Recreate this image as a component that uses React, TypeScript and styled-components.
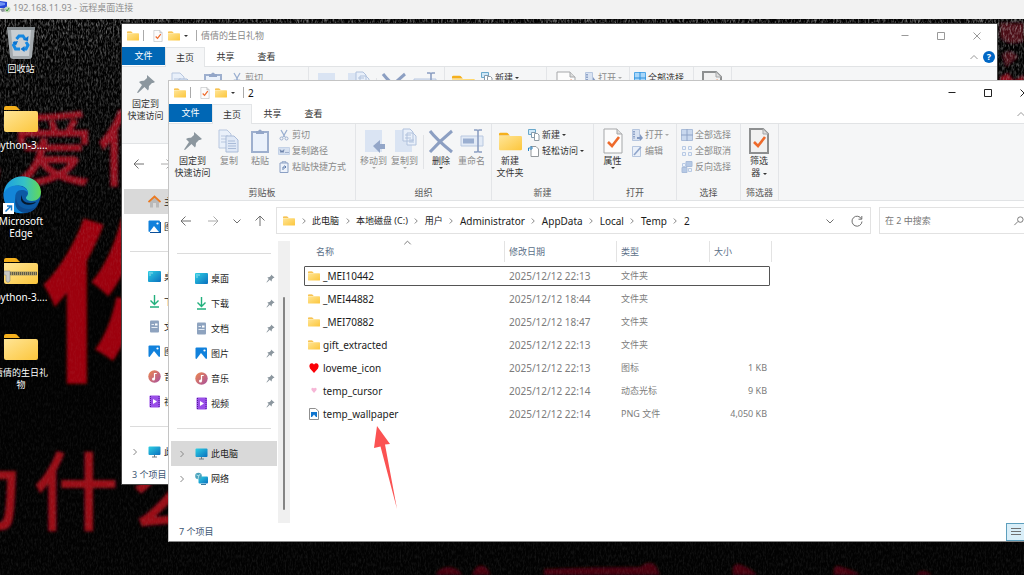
import React from "react";
import styled, { createGlobalStyle, css } from "styled-components";

const GlobalStyle = createGlobalStyle`
  * { box-sizing: border-box; }
  body {
    margin: 0;
    font-family: "Noto Sans", "Noto Sans CJK SC", sans-serif;
    font-size: 9px;
    line-height: 12px;
    color: #333;
    overflow: hidden;
  }
  button {
    font: inherit;
    color: inherit;
    background: none;
    border: 0;
    padding: 0;
    margin: 0;
    white-space: nowrap;
  }
  ul { list-style: none; margin: 0; padding: 0; }
  svg { display: block; flex: none; }
`;

/* ---------- icons ---------- */

type IconProps = { size?: number };

const FolderIcon = ({ size = 13 }: IconProps) => (
  <svg width={size} height={size} viewBox="0 0 34 34">
    <path d="M0 8V6q0-2 2-2h9q2 0 3 2l2 2H0z" fill="#f5b01c" />
    <path d="M0 9h32q2 0 2 2v17q0 2-2 2H2q-2 0-2-2z" fill="url(#folderFill)" />
  </svg>
);

const ZipIcon = () => (
  <svg width="34" height="34" viewBox="0 0 34 34">
    <path d="M0 8V6q0-2 2-2h9q2 0 3 2l2 2H0z" fill="#f5b01c" />
    <path d="M0 9h32q2 0 2 2v17q0 2-2 2H2q-2 0-2-2z" fill="url(#folderFill)" />
    <path d="M4 19.500h29" stroke="#a99863" strokeWidth="4" />
    <path d="M6 19.500h27" stroke="#5e5a4c" strokeWidth="3" strokeDasharray="1 1" />
    <path d="M0 17h6v10q-2 3-4 0v-6H0z" fill="#c8c8c4" stroke="#8d8d86" strokeWidth=".6" />
  </svg>
);

const RecycleIcon = () => (
  <svg width="28" height="34" viewBox="0 0 28 34">
    <path d="M0 1l3 30q.5 2 3 2h16q2.500 0 3-2l3-30z" fill="#a3a9ad" />
    <path d="M4 4h20l-2 26H6z" fill="#c9ced2" />
    <path d="M0 1h28l-.4 3H.4z" fill="#858c90" />
    <path d="M9.500 13l2.500-3h4l2 3M19 16l2 3-2 4h-3M8.500 16L6.500 19l2 4H13" fill="none" stroke="#1687e0" strokeWidth="3" />
    <path d="M16 14l5 1 .5-5zM17.500 20v6l-4-3zM5.500 16l5.500-1-2 4.500z" fill="#0b72cf" />
  </svg>
);

const EdgeIcon = () => (
  <svg width="40" height="40" viewBox="0 0 40 40">
    <circle cx="21" cy="20" r="18.500" fill="#0c59a4" />
    <path d="M2.500 20C3 9 11 1.500 21 1.500c11 0 19 7 19 15.500 0 6-4.500 9-9 9-4 0-6-1.500-6-3 0-1.500 2-2 2-5 0-4-4-7.500-9.500-7.500C10 10.500 4 15 2.500 20z" fill="url(#edgeTop)" />
    <path d="M2.500 20C4 14 9 10.500 15 10.500c6 0 12 3 12 7.500-1.500-2.500-4-3-6.500-3-5 0-7 4.500-6 10 1 6 6 11 12 11.500C14 42 2.500 33 2.500 20z" fill="#1385d8" />
    <path d="M15 22c0 7 5 12 12 12 5 0 8-2 10.500-5-4.500 8-10 9.500-16 8.500-6-2-9-8-6.500-15.500z" fill="#0b4a90" />
    <path d="M21 20c-1 6 5 10 14 7-3 4-13 4-15-2q-.5-3 1-5z" fill="#05182e" />
    <rect x="2" y="28" width="11" height="11" fill="#fff" />
    <path d="M4.500 36.500l5.500-5.500M6 31h4.500v4.500" fill="none" stroke="#1779cb" strokeWidth="1.500" />
  </svg>
);

const RdpIcon = () => (
  <svg width="11" height="13" viewBox="0 0 11 13">
    <path d="M0 1l7 1v6L0 8z" fill="#2647d8" />
    <path d="M0 2l5 1v2L0 6z" fill="#6f93f4" />
    <path d="M0 9l4-1 3 3-5 1z" fill="#8f959e" />
    <circle cx="7.500" cy="9.500" r="3" fill="#c3d7bb" />
    <path d="M6 9.500l1 1.500 2-3" fill="none" stroke="#3b983a" />
  </svg>
);

const PropertiesIcon = ({ size = 13, gray = false }: IconProps & { gray?: boolean }) => (
  <svg width={size} height={size} viewBox="0 0 26 26">
    <path d="M4 1h13l5 5v19H4z" fill={gray ? "#f1f1f1" : "#fcfcfc"} stroke={gray ? "#8d8f90" : "#a5a7a9"} strokeWidth={gray ? 2 : 1} />
    <path d="M17 1v5h5" fill="#ddd" stroke="#a5a7a9" />
    <path d="M8 14l4 4 7-9" fill="none" stroke="#ee6a2b" strokeWidth="2.600" />
  </svg>
);

const PushPin = ({ size = 20 }: IconProps) => (
  <svg width={size} height={size} viewBox="0 0 20 20">
    <path d="M11 1l8 7-2 1-1 0-3 3q0 3-1 4.500L8.500 13 2 19l-1-.6L6 11 3 8q2-1.500 5-1.300L11 4z" fill="#8c979f" />
  </svg>
);

const CopyIcon = () => (
  <svg width="22" height="26" viewBox="0 0 22 26">
    <path d="M1 2h8l4 4v14H1z" fill="#e9f0fa" stroke="#b8c7df" />
    <path d="M3 8h7M3 11h7M3 14h7" stroke="#b8c7df" />
    <path d="M8 8h8l4 4v12H8z" fill="#dfe8f6" stroke="#a9bbd8" />
    <path d="M10 13h7M10 15.500h8M10 18h8M10 20.500h8" stroke="#a9bbd8" />
  </svg>
);

const PasteIcon = () => (
  <svg width="20" height="26" viewBox="0 0 20 26">
    <path d="M2 4h16v20H2z" fill="#eaf1fb" stroke="#9dafce" strokeWidth="2" />
    <path d="M6 5V3h2q2-3 4 0h2v3H6z" fill="#93a6c8" />
  </svg>
);

const MoveToIcon = () => (
  <svg width="22" height="26" viewBox="0 0 22 26">
    <path d="M2 2h17v22H2z" fill="#dae4f3" />
    <path d="M10 18l7-6v4h5v5h-5v4z" fill="#93a6c8" />
  </svg>
);

const CopyToIcon = () => (
  <svg width="24" height="26" viewBox="0 0 24 26">
    <path d="M2 2h17v22H2z" fill="#dae4f3" />
    <path d="M10 1h7l3 3v9H10zM14 5h6l3 3v9h-9z" fill="#e9f0fa" stroke="#b1c2dd" />
    <path d="M12 7h6M12 10h6M16 12h5M16 14h5" stroke="#b1c2dd" />
  </svg>
);

const DeleteIcon = () => (
  <svg width="26" height="26" viewBox="0 0 26 26">
    <path d="M2 3q6 8 22 21M24 3Q13 12 2 24" fill="none" stroke="#8c9fc2" strokeWidth="3" />
  </svg>
);

const RenameIcon = () => (
  <svg width="26" height="26" viewBox="0 0 26 26">
    <path d="M2 8h22v10H2z" fill="#e2eaf6" stroke="#b9c8e0" />
    <path d="M4 10.500h11v5H4z" fill="#9aaed0" />
    <path d="M15 2h3l1 1 1-1h3M15 24h3l1-1 1 1h3M19 3v20" fill="none" stroke="#8c9fc2" strokeWidth="1.600" />
  </svg>
);

type SmallKind = "cut" | "path" | "shortcut" | "newItem" | "easy" | "open" | "edit" | "all" | "none" | "invert";

const SmallIcon = ({ kind, vivid = false }: { kind: SmallKind; vivid?: boolean }) => (
  <svg width="12" height="12" viewBox="0 0 12 12" fill="none" stroke="#9aafd0">
    {kind === "cut" && (
      <>
        <path d="M3 1l4 7M9 1L5 8" strokeWidth="1.300" />
        <circle cx="3.500" cy="9.500" r="1.500" />
        <circle cx="8.500" cy="9.500" r="1.500" />
      </>
    )}
    {kind === "path" && (
      <>
        <path d="M.5 2.500h11v7H.5z" fill="#d5e0f0" stroke="#c4d2e7" />
        <path d="M2 4.500l1 3 1-2 1 2 1-3M7.500 7.500h1M9.500 7.500h1" stroke="#6d83aa" />
      </>
    )}
    {kind === "shortcut" && (
      <>
        <path d="M2 2h8v9.500H2zM4 2V.8h4V2" fill="#eef3fb" stroke="#8ba0c4" />
        <path d="M5 9V6h3M6.500 4.500L8 6 6.500 7.500" stroke="#5f7cab" />
      </>
    )}
    {kind === "newItem" && (
      <>
        <path d="M.5.5h7v5h-7z" fill="#cfe8f8" stroke="#69a8cb" />
        <path d="M3.500 3.500h4v5h-4z" fill="#fff" stroke="#829bae" />
        <path d="M6.500 4.500h3l1.500 1.500v5.500H6.500z" fill="#fff" stroke="#8f9ba4" />
      </>
    )}
    {kind === "easy" && (
      <>
        <path d="M3 1.500h5L10.500 4v7.500H3z" fill="#fff" stroke="#94999c" />
        <path d="M.5 6V3h3M2.500 1l2 2-2 2" stroke="#2786c9" />
      </>
    )}
    {kind === "open" && (
      <>
        <path d="M1.500.5h7v11h-7z" fill="#d9e3f2" stroke="#b6c6df" />
        <path d="M3 2v8" stroke="#7790bb" strokeWidth="1.500" strokeDasharray="1.500 1" />
        <path d="M6 8h3V5l3 4-3 3v-2H6z" fill="#8299c1" stroke="none" />
      </>
    )}
    {kind === "edit" && (
      <>
        <path d="M1.500 1.500h8v10h-8z" fill="#eaf0f9" stroke="#b6c6df" />
        <path d="M3 10l7-8" stroke="#8fa5cb" strokeWidth="1.600" />
      </>
    )}
    {kind === "all" && (
      <>
        <path d="M.5.500h11v11H.5z" fill={vivid ? "#a9d7f9" : "#c9d8ee"} stroke={vivid ? "#51a8e8" : "#abbdd9"} />
        <path d="M6 0v12M0 6h12" stroke={vivid ? "#2c8fdb" : "#8fa4c8"} />
      </>
    )}
    {kind === "none" && (
      <path d="M1.500 1.500h3v3h-3zM7.500 1.500h3v3h-3zM1.500 7.500h3v3h-3zM7.500 7.500h3v3h-3z" fill="#edf3fb" stroke="#b9cae4" />
    )}
    {kind === "invert" && (
      <>
        <path d="M5 .5h6v5H5zM1 6.500h5v5H1z" fill="#b6c9e5" stroke="#a9bcda" />
        <path d="M1.500 2.500h3v3h-3zM7.500 7.500h3v3h-3z" fill="#edf3fb" stroke="#b9cae4" />
      </>
    )}
  </svg>
);

const Caret = styled.i<{ $dim?: boolean }>`
  display: inline-block;
  vertical-align: middle;
  border: 2px solid transparent;
  border-top-color: ${(p) => (p.$dim ? "#aaa" : "#333")};
  border-bottom: 0;
`;

type StrokeKind = "left" | "right" | "up" | "down" | "chevR" | "chevU" | "min" | "max" | "close" | "refresh" | "search" | "lines";

const strokePaths: Record<StrokeKind, string> = {
  left: "M11 6H1M5.500 1.500L1 6l4.500 4.500",
  right: "M1 6h10M6.500 1.500L11 6l-4.500 4.500",
  up: "M6 11V1M1.500 5.500L6 1l4.500 4.500",
  down: "M2.500 4.500L6 8l3.500-3.500",
  chevR: "M4.500 3l3 3-3 3",
  chevU: "M2.500 8L6 4.500 9.500 8",
  min: "M2.500 5.500h7",
  max: "M2.500 2.500h7v7h-7z",
  close: "M2.500 2.500l7 7M9.500 2.500l-7 7",
  refresh: "M10.500 4A5 5 0 1 0 11 6.500M10.800 1v3.200H7.500",
  search: "M5.500 7L1.500 11M8 2a3 3 0 1 1 0 6 3 3 0 0 1 0-6z",
  lines: "M1 2.500h10M1 5.500h10M1 8.500h10",
};

const Stroke = ({ kind, color = "#707070", size = 12 }: { kind: StrokeKind; color?: string; size?: number }) => (
  <svg width={size} height={size} viewBox="0 0 12 12" fill="none" stroke={color}>
    <path d={strokePaths[kind]} />
  </svg>
);

type PlaceKind = "home" | "gallery" | "desktop" | "download" | "docs" | "pictures" | "music" | "video" | "pc" | "network";

const PlaceIcon = ({ kind }: { kind: PlaceKind }) => (
  <svg width="13" height="13" viewBox="0 0 13 13">
    {kind === "home" && (
      <>
        <path d="M2 6l4.500-4L11 6v6.500H8V8H5v4.500H2z" fill="#b9b9b9" />
        <path d="M.5 7l6-5.500 6 5.500" fill="none" stroke="#ea7a22" strokeWidth="1.700" />
      </>
    )}
    {(kind === "gallery" || kind === "pictures") && (
      <>
        {kind === "gallery" && <path d="M2 2h11v11H2z" fill="#0b4f98" />}
        <rect x=".5" y=".5" width="11.500" height="11.500" rx="1" fill="#1181dc" />
        <path d="M1.500 12L6 6l5 6z" fill="#fff" />
        <circle cx="9.500" cy="3.500" r="1.100" fill="#fff" />
      </>
    )}
    {kind === "desktop" && (
      <>
        <rect y="1" width="13" height="11" rx="1" fill="url(#screenFill)" />
        <path d="M1.500 3h1M1.500 5h1M3.500 3h1" stroke="#fff" />
      </>
    )}
    {kind === "download" && <path d="M6.500 0v9M2.500 5.500l4 4 4-4M2 12h9" fill="none" stroke="#22b07d" strokeWidth="1.400" />}
    {kind === "docs" && (
      <>
        <rect x="2" y=".5" width="9" height="12" rx="1" fill="#8ea3bf" />
        <path d="M7 3.500h2.500v2H7z" fill="#fff" />
        <path d="M3.500 4.500h2.500M3.500 7.500h6" stroke="#e4ebf3" />
      </>
    )}
    {kind === "music" && (
      <>
        <circle cx="6.500" cy="6.500" r="6.200" fill="url(#musicFill)" />
        <path d="M6.500 9V3.500h2.200" fill="none" stroke="#fff" strokeWidth="1.200" />
        <circle cx="5.500" cy="9" r="1.500" fill="#fff" />
      </>
    )}
    {kind === "video" && (
      <>
        <rect x="1.500" y=".5" width="10.500" height="12" rx="1" fill="#9a4fe8" />
        <path d="M2.500 1v11M11 1v11" stroke="#4f1c96" strokeDasharray="1 1" />
        <path d="M5 4l4 2.500L5 9z" fill="#fff" />
      </>
    )}
    {kind === "pc" && (
      <>
        <rect x=".5" y="1.500" width="12" height="8.500" rx="1" fill="url(#screenFill)" />
        <path d="M6.500 10v2M4 12h5" stroke="#6d7b85" />
      </>
    )}
    {kind === "network" && (
      <>
        <rect x="3.500" y="4.500" width="9.500" height="7" rx="1" fill="url(#screenFill)" />
        <circle cx="3.500" cy="4" r="3.300" fill="#4aa3bd" />
        <path d="M1.500 3q2 2 4-1M3 7l1-4" stroke="#c8eef2" fill="none" strokeWidth=".8" />
        <path d="M6 12.500h5" stroke="#3c7ba0" />
      </>
    )}
  </svg>
);

type FileKind = "folder" | "heart" | "smallHeart" | "png";

const FileIcon = ({ kind }: { kind: FileKind }) =>
  kind === "folder" ? (
    <FolderIcon size={12} />
  ) : (
    <svg width="12" height="12" viewBox="0 0 12 12">
      {kind === "heart" && <path d="M6 11L2 6.500Q.5 4 2 2q2.200-1.700 4 .5Q7.800.300 10 2q1.500 2 0 4.500z" fill="#fb0007" />}
      {kind === "smallHeart" && <path d="M6 8L3.500 5q-.6-1.500.5-2 1.200-.5 2 .6.800-1.100 2-.6 1.100.5.5 2z" fill="#f6b6d6" />}
      {kind === "png" && (
        <>
          <path d="M1.500.5h6L10.500 3v8.500h-9z" fill="#fff" stroke="#8f8f8f" />
          <rect x="3" y="4" width="6" height="5" fill="#1176cf" />
          <path d="M4 9l2-2.500L8 9z" fill="#fff" />
        </>
      )}
    </svg>
  );

/* ---------- desktop ---------- */

const Screen = styled.div`
  display: flex;
  flex-direction: column;
  height: 100vh;
`;

const SessionBar = styled.header`
  display: flex;
  gap: 2px;
  height: 19px;
  flex: none;
  background: #f2f2f2;
  color: #8f8f8f;
  line-height: 15px;
`;

const Desktop = styled.main`
  position: relative;
  flex: 1;
  min-height: 0;
  overflow: hidden;
  background: #020202;
`;

const WallpaperArt = styled.svg`
  position: absolute;
  inset: 0;
  width: 100%;
  height: 100%;
  font-family: "Noto Sans CJK SC", sans-serif;
  font-weight: 500;
`;

const Wallpaper = () => (
  <WallpaperArt aria-hidden="true">
    <defs>
      <linearGradient id="folderFill" x1="0" y1="0" x2="1" y2="1">
        <stop offset="0" stopColor="#ffe596" />
        <stop offset="1" stopColor="#fcc63c" />
      </linearGradient>
      <linearGradient id="edgeTop">
        <stop offset="0" stopColor="#1b9de2" />
        <stop offset=".55" stopColor="#35c1c6" />
        <stop offset="1" stopColor="#63d957" />
      </linearGradient>
      <linearGradient id="screenFill" x1="0" y1="0" x2="1" y2="1">
        <stop offset="0" stopColor="#2ed0e4" />
        <stop offset="1" stopColor="#0a6fbe" />
      </linearGradient>
      <linearGradient id="musicFill" x1="0" y1="0" x2="1" y2="1">
        <stop offset="0" stopColor="#ee8a4f" />
        <stop offset="1" stopColor="#a84f9c" />
      </linearGradient>
      <linearGradient id="grainFade" x1="0" y1="0" x2="0" y2="1">
        <stop offset="0" stopColor="#ccc" />
        <stop offset=".08" stopColor="#888" />
        <stop offset=".3" stopColor="#444" />
        <stop offset=".5" stopColor="#111" />
        <stop offset="1" stopColor="#222" />
      </linearGradient>
      <mask id="grainMask">
        <rect width="100%" height="100%" fill="url(#grainFade)" />
      </mask>
      <filter id="grain" x="0" y="0" width="100%" height="100%">
        <feTurbulence type="fractalNoise" baseFrequency="0.6 0.25" numOctaves="2" seed="4" />
        <feColorMatrix values="0 0 0 0 .6  0 0 0 0 .6  0 0 0 0 .6  2.400 0 0 0 -1" />
      </filter>
      <filter id="soften">
        <feGaussianBlur stdDeviation="1.500" />
      </filter>
    </defs>
    <g filter="url(#soften)">
      <g fill="#960a1a" fontSize="82">
        <text x="-80" y="160">我</text>
        <text x="12" y="160">爱</text>
        <text x="98" y="160">你</text>
      </g>
      <text x="42" y="349" fill="#9c0008" fontSize="176" fontWeight="700">你</text>
      <g fill="#990a15" fontSize="86">
        <text x="-62" y="505">为</text>
        <text x="33" y="505">什</text>
        <text x="130" y="505">么</text>
      </g>
      <g fill="#460510">
        <path d="M436 556q2-8 14-8 10 2 12 8zM472 556q4-12 12-9 6 4 6 9zM544 556v-6q50-2 96-2 10-8 16-1l4 9zM733 556q-2-12 6-11 12 4 18 11zM834 556q-2-12 8-8 12 3 18 8zM916 556q6-8 16 0z" />
      </g>
      <g fill="#4c0812">
        <path d="M1000 4h24v18q-16 6-24-4zM1002 36q8-8 16 2l-12 10z" />
        <path d="M1000 58l8-4 6 8 10-6v40h-24z" fill="#8a0a1a" />
      </g>
    </g>
    <rect width="100%" height="100%" filter="url(#grain)" mask="url(#grainMask)" opacity=".7" />
  </WallpaperArt>
);

const Shortcuts = styled.ul`
  position: relative;
  width: 76px;
  margin-left: -17px;
  padding-top: 4px;
`;

const Shortcut = styled.li`
  display: flex;
  flex-direction: column;
  align-items: center;
  height: 76px;
  color: #fff;
  text-align: center;
  text-shadow: 0 1px 2px #000;
`;

const ShortcutArt = styled.span`
  display: grid;
  place-items: center;
  height: 40px;
  flex: none;
`;

const ShortcutName = styled.span<{ $latin?: boolean }>`
  width: 58px;
  font-size: ${(p) => (p.$latin ? 10 : 9)}px;
`;

const shortcuts: { name: string; art: React.ReactNode; latin?: boolean }[] = [
  { name: "回收站", art: <RecycleIcon /> },
  { name: "python-3....", art: <FolderIcon size={34} />, latin: true },
  { name: "Microsoft Edge", art: <EdgeIcon />, latin: true },
  { name: "python-3....", art: <ZipIcon />, latin: true },
  { name: "倩倩的生日礼物", art: <FolderIcon size={34} /> },
];

/* ---------- explorer window ---------- */

const Frame = styled.section<{ $active: boolean }>`
  position: absolute;
  display: flex;
  flex-direction: column;
  overflow: hidden;
  background: #fff;
  border: 1px solid #999;
  ${(p) =>
    p.$active
      ? css`
          top: 61px;
          left: 168px;
          right: -21px;
          bottom: 33px;
          border-color: #c4c4c4 #c4c4c4 #888;
        `
      : css`
          top: 4px;
          left: 121px;
          right: 26px;
          bottom: 90px;
          border-color: #444;
        `}
`;

const TitleBar = styled.div<{ $active: boolean }>`
  display: flex;
  align-items: center;
  height: 23px;
  flex: none;
  padding: 0 2px 0 5px;
  color: ${(p) => (p.$active ? "#111" : "#888")};
`;

const QuickTools = styled.div`
  display: flex;
  align-items: center;
  gap: 4px;
  flex: 1;
`;

const QuickSet = styled.div`
  display: flex;
  align-items: center;
  gap: 4px;
  padding: 0 4px;
`;

const Rule = styled.i`
  width: 1px;
  height: 11px;
  background: #aaa;
`;

const WindowTitle = styled.h2<{ $active: boolean }>`
  margin: 0;
  font-size: ${(p) => (p.$active ? 10 : 9)}px;
  font-weight: 400;
`;

const CaptionButton = styled.button`
  display: grid;
  place-items: center;
  width: 36px;
  height: 23px;
`;

const TabRow = styled.div`
  display: flex;
  height: 19px;
  flex: none;
`;

const Tab = styled.button<{ $kind?: "file" | "current" }>`
  width: 41px;
  height: 19px;
  ${(p) =>
    p.$kind === "file" &&
    css`
      width: 43px;
      height: 18px;
      background: #0067b5;
      color: #fff;
    `}
  ${(p) =>
    p.$kind === "current" &&
    css`
      position: relative;
      width: 40px;
      height: 20px;
      background: #f5f6f7;
      border: 1px solid #e3e5e7;
      border-bottom: 0;
    `}
`;

const TabTools = styled.div`
  display: flex;
  align-items: center;
  gap: 3px;
  margin-left: auto;
  padding-right: 2px;
`;

const HelpButton = styled.button`
  width: 12px;
  height: 12px;
  border-radius: 50%;
  background: #0067c5;
  color: #fff;
  font-weight: 700;
`;

const RibbonBar = styled.div`
  display: flex;
  height: 78px;
  flex: none;
  background: #f5f6f7;
  border: solid #e1e3e5;
  border-width: 1px 0;
`;

const RibbonGroup = styled.div<{ $w: number }>`
  display: flex;
  flex-direction: column;
  justify-content: space-between;
  width: ${(p) => p.$w}px;
  padding: 3px 0 1px;
  border-right: 1px solid #e3e5e8;
  text-align: center;
  color: #555;
`;

const GroupTools = styled.div`
  display: flex;
  padding-left: 2px;
`;

const BigTool = styled.button<{ $w: number; $dim?: boolean }>`
  display: flex;
  flex-direction: column;
  align-items: center;
  width: ${(p) => p.$w}px;
  color: ${(p) => (p.$dim ? "#8a8a8a" : "#333")};
  white-space: pre;
`;

const BigArt = styled.span`
  display: grid;
  place-items: center;
  height: 28px;
`;

const DropMark = styled.span`
  display: flex;
  justify-content: center;
  height: 4px;
`;

const ToolColumn = styled.div`
  display: flex;
  flex-direction: column;
  padding-left: 2px;
`;

const SmallTool = styled.button<{ $dim?: boolean }>`
  display: flex;
  align-items: center;
  gap: 2px;
  height: 16px;
  color: ${(p) => (p.$dim ? "#8a8a8a" : "#333")};
`;

const ToolRule = styled.i`
  width: 1px;
  height: 34px;
  margin: 8px 2px 0 3px;
  background: #e1e3e6;
`;

const Big = ({ w, art, label, dim, drop }: { w: number; art: React.ReactNode; label: React.ReactNode; dim?: boolean; drop?: boolean }) => (
  <BigTool $w={w} $dim={dim}>
    <BigArt>{art}</BigArt>
    <span>{label}</span>
    {drop && (
      <DropMark>
        <Caret $dim={dim} />
      </DropMark>
    )}
  </BigTool>
);

const Small = ({ kind, label, dim, drop, vivid }: { kind: SmallKind; label: string; dim?: boolean; drop?: boolean; vivid?: boolean }) => (
  <SmallTool $dim={dim}>
    <SmallIcon kind={kind} vivid={vivid} />
    {label}
    {drop && <Caret $dim={dim} />}
  </SmallTool>
);

const Ribbon = ({ canSelect }: { canSelect: boolean }) => (
  <RibbonBar>
    <RibbonGroup $w={187}>
      <GroupTools>
        <Big w={43} art={<PushPin />} label={"固定到\n快速访问"} />
        <Big w={30} art={<CopyIcon />} label="复制" dim />
        <Big w={32} art={<PasteIcon />} label="粘贴" dim />
        <ToolColumn>
          <Small kind="cut" label="剪切" dim />
          <Small kind="path" label="复制路径" dim />
          <Small kind="shortcut" label="粘贴快捷方式" dim />
        </ToolColumn>
      </GroupTools>
      剪贴板
    </RibbonGroup>
    <RibbonGroup $w={136}>
      <GroupTools>
        <Big w={31} art={<MoveToIcon />} label="移动到" dim drop />
        <Big w={31} art={<CopyToIcon />} label="复制到" dim drop />
        <ToolRule />
        <Big w={30} art={<DeleteIcon />} label="删除" drop />
        <Big w={31} art={<RenameIcon />} label="重命名" dim />
      </GroupTools>
      组织
    </RibbonGroup>
    <RibbonGroup $w={102}>
      <GroupTools>
        <Big w={32} art={<FolderIcon size={23} />} label={"新建\n文件夹"} />
        <ToolColumn>
          <Small kind="newItem" label="新建" drop />
          <Small kind="easy" label="轻松访问" drop />
        </ToolColumn>
      </GroupTools>
      新建
    </RibbonGroup>
    <RibbonGroup $w={83}>
      <GroupTools>
        <Big w={33} art={<PropertiesIcon size={26} />} label="属性" drop />
        <ToolColumn>
          <Small kind="open" label="打开" dim drop />
          <Small kind="edit" label="编辑" dim />
        </ToolColumn>
      </GroupTools>
      打开
    </RibbonGroup>
    <RibbonGroup $w={64}>
      <GroupTools>
        <ToolColumn>
          <Small kind="all" label="全部选择" dim={!canSelect} vivid={canSelect} />
          <Small kind="none" label="全部取消" dim />
          <Small kind="invert" label="反向选择" dim />
        </ToolColumn>
      </GroupTools>
      选择
    </RibbonGroup>
    <RibbonGroup $w={38}>
      <GroupTools>
        <Big
          w={32}
          art={<PropertiesIcon size={26} gray />}
          label={
            <>
              {"筛选\n器 "}
              <Caret />
            </>
          }
        />
      </GroupTools>
      筛选器
    </RibbonGroup>
  </RibbonBar>
);

const AddressRow = styled.div`
  display: flex;
  height: 40px;
  flex: none;
  padding: 6px 8px 7px 4px;
`;

const NavButton = styled.button<{ $w: number }>`
  display: grid;
  place-items: center;
  width: ${(p) => p.$w}px;
`;

const AddressBox = styled.nav`
  display: flex;
  align-items: center;
  flex: 1;
  margin-left: 4px;
  padding: 0 7px 0 6px;
  border: 1px solid #e2e2e2;
  color: #1c1c1c;
`;

const Crumb = styled.button<{ $latin: boolean }>`
  font-size: ${(p) => (p.$latin ? 10 : 9)}px;
`;

const CrumbGap = styled.span`
  display: flex;
  justify-content: center;
  width: 17px;
`;

const AddressTools = styled.div`
  display: flex;
  gap: 15px;
  margin-left: auto;
`;

const SearchBox = styled.label`
  display: flex;
  align-items: center;
  width: 157px;
  margin-left: 8px;
  padding: 0 11px 0 5px;
  border: 1px solid #e2e2e2;
`;

const SearchInput = styled.input`
  flex: 1;
  min-width: 0;
  padding: 0;
  border: 0;
  outline: 0;
  font: inherit;
  background: none;
  &::placeholder { color: #777; }
`;

const Body = styled.div`
  display: flex;
  flex: 1;
  min-height: 0;
`;

const PlaceList = styled.ul<{ $offset: number }>`
  width: 109px;
  flex: none;
  padding: ${(p) => p.$offset}px 1px 0 2px;
  overflow: hidden;
`;

const PlaceDivider = styled.li`
  height: 25px;
  padding: 12px 6px;
  &::before {
    content: "";
    display: block;
    height: 1px;
    background: #dcdcdc;
  }
`;

const Place = styled.li<{ $current?: boolean }>`
  display: flex;
  align-items: center;
  height: 25px;
  gap: 3px;
  padding-right: 2px;
  color: #1c1c1c;
  background: ${(p) => (p.$current ? "#d9d9d9" : "none")};
`;

const Expander = styled.span`
  display: grid;
  place-items: center;
  width: 21px;
`;

const PlaceName = styled.span`
  flex: 1;
  white-space: nowrap;
`;

const ScrollTrack = styled.div`
  display: flex;
  justify-content: center;
  width: 12px;
  flex: none;
  padding: 56px 0 13px;
  background: #f0f0f0;
  &::before {
    content: "";
    width: 2px;
    border-radius: 1px;
    background: #858585;
  }
`;

const FileTable = styled.table`
  width: 468px;
  height: max-content;
  margin-left: 14px;
  border-collapse: collapse;
  table-layout: fixed;
  color: #7c7c7c;
`;

const HeadCell = styled.th<{ $w: number }>`
  position: relative;
  width: ${(p) => p.$w}px;
  height: 24px;
  padding: 0 0 2px 4px;
  font-weight: 400;
  text-align: left;
  color: #5b7088;
  &:first-child { padding-left: 12px; }
  &::after {
    content: "";
    position: absolute;
    top: 0;
    right: 0;
    width: 1px;
    height: 21px;
    background: #e3e3e3;
  }
`;

const SortMark = styled.span`
  position: absolute;
  top: -4px;
  left: 49%;
`;

const FileRow = styled.tr<{ $focused: boolean }>`
  position: relative;
  height: 23px;
  ${(p) =>
    p.$focused &&
    css`
      &::after {
        content: "";
        position: absolute;
        inset: 1px 2px 2px 0;
        border: 1px solid #555;
        border-radius: 1px;
      }
    `}
`;

const Cell = styled.td<{ $latin?: boolean }>`
  padding: 0 0 2px 4px;
  font-size: ${(p) => (p.$latin ? 10 : 9)}px;
  white-space: nowrap;
`;

const SizeCell = styled(Cell)`
  padding-right: 5px;
  text-align: right;
`;

const FileName = styled.span`
  display: flex;
  align-items: center;
  gap: 3px;
  color: #1c1c1c;
`;

const StatusBar = styled.footer`
  display: flex;
  align-items: center;
  justify-content: space-between;
  height: 18px;
  flex: none;
  padding-left: 10px;
  color: #3d5673;
`;

const ViewButtons = styled.div`
  display: flex;
`;

const ViewButton = styled.button<{ $on?: boolean }>`
  display: grid;
  place-items: center;
  width: 19px;
  height: 18px;
  border: 1px solid ${(p) => (p.$on ? "#5d9fbd" : "transparent")};
  background: ${(p) => (p.$on ? "#d9eef8" : "none")};
`;

type PlaceData = { kind: PlaceKind; name: string; pinned?: boolean; expandable?: boolean } | null;

const commonPlaces: PlaceData[] = [
  null,
  { kind: "desktop", name: "桌面", pinned: true },
  { kind: "download", name: "下载", pinned: true },
  { kind: "docs", name: "文档", pinned: true },
  { kind: "pictures", name: "图片", pinned: true },
  { kind: "music", name: "音乐", pinned: true },
  { kind: "video", name: "视频", pinned: true },
  null,
  { kind: "pc", name: "此电脑", expandable: true },
];

const homePlaces: PlaceData[] = [{ kind: "home", name: "主文件夹" }, { kind: "gallery", name: "图库" }, ...commonPlaces];
const folderPlaces: PlaceData[] = [...commonPlaces, { kind: "network", name: "网络", expandable: true }];

const crumbs = ["此电脑", "本地磁盘 (C:)", "用户", "Administrator", "AppData", "Local", "Temp", "2"];

const files: { name: string; kind: FileKind; date: string; type: string; size?: string }[] = [
  { name: "_MEI10442", kind: "folder", date: "2025/12/12 22:13", type: "文件夹" },
  { name: "_MEI44882", kind: "folder", date: "2025/12/12 18:44", type: "文件夹" },
  { name: "_MEI70882", kind: "folder", date: "2025/12/12 18:47", type: "文件夹" },
  { name: "gift_extracted", kind: "folder", date: "2025/12/12 22:13", type: "文件夹" },
  { name: "loveme_icon", kind: "heart", date: "2025/12/12 22:13", type: "图标", size: "1 KB" },
  { name: "temp_cursor", kind: "smallHeart", date: "2025/12/12 22:14", type: "动态光标", size: "9 KB" },
  { name: "temp_wallpaper", kind: "png", date: "2025/12/12 22:14", type: "PNG 文件", size: "4,050 KB" },
];

const Files = () => (
  <FileTable>
    <thead>
      <tr>
        <HeadCell $w={201}>
          名称
          <SortMark>
            <Stroke kind="chevU" size={11} />
          </SortMark>
        </HeadCell>
        <HeadCell $w={112}>修改日期</HeadCell>
        <HeadCell $w={93}>类型</HeadCell>
        <HeadCell $w={62}>大小</HeadCell>
      </tr>
    </thead>
    <tbody>
      {files.map((f, i) => (
        <FileRow key={f.name} $focused={i === 0}>
          <Cell $latin>
            <FileName>
              <FileIcon kind={f.kind} />
              {f.name}
            </FileName>
          </Cell>
          <Cell $latin>{f.date}</Cell>
          <Cell>{f.type}</Cell>
          <SizeCell>{f.size}</SizeCell>
        </FileRow>
      ))}
    </tbody>
  </FileTable>
);

type ExplorerProps = {
  title: string;
  active: boolean;
  places: PlaceData[];
  current: PlaceKind;
  offset: number;
  path: string[];
  status: string;
  children?: React.ReactNode;
};

const Explorer = ({ title, active, places, current, offset, path, status, children }: ExplorerProps) => {
  const tone = active ? "#222" : "#999";
  return (
    <Frame $active={active} aria-label={title}>
      <TitleBar $active={active}>
        <QuickTools>
          <FolderIcon size={12} />
          <Rule />
          <QuickSet>
            <PropertiesIcon size={12} />
            <FolderIcon size={12} />
            <Caret />
          </QuickSet>
          <Rule />
          <WindowTitle $active={active}>{title}</WindowTitle>
        </QuickTools>
        <CaptionButton aria-label="最小化"><Stroke kind="min" color={tone} /></CaptionButton>
        <CaptionButton aria-label="最大化"><Stroke kind="max" color={tone} /></CaptionButton>
        <CaptionButton aria-label="关闭"><Stroke kind="close" color={tone} /></CaptionButton>
      </TitleBar>
      <TabRow>
        <Tab $kind="file">文件</Tab>
        <Tab $kind="current">主页</Tab>
        <Tab>共享</Tab>
        <Tab>查看</Tab>
        <TabTools>
          <Stroke kind="chevU" color="#999" />
          <HelpButton aria-label="帮助">?</HelpButton>
        </TabTools>
      </TabRow>
      <Ribbon canSelect={!active} />
      <AddressRow>
        <NavButton $w={25} aria-label="后退"><Stroke kind="left" /></NavButton>
        <NavButton $w={29} aria-label="前进"><Stroke kind="right" color="#aaa" /></NavButton>
        <NavButton $w={20} aria-label="最近位置"><Stroke kind="down" /></NavButton>
        <NavButton $w={25} aria-label="上移"><Stroke kind="up" /></NavButton>
        <AddressBox>
          <FolderIcon size={12} />
          {path.map((c) => (
            <React.Fragment key={c}>
              <CrumbGap>
                <Stroke kind="chevR" size={10} />
              </CrumbGap>
              <Crumb $latin={/^\w+$/.test(c)}>{c}</Crumb>
            </React.Fragment>
          ))}
          <AddressTools>
            <Stroke kind="down" />
            <Stroke kind="refresh" />
          </AddressTools>
        </AddressBox>
        <SearchBox>
          <SearchInput aria-label="搜索" placeholder={`在 ${title} 中搜索`} />
          <Stroke kind="search" size={11} />
        </SearchBox>
      </AddressRow>
      <Body>
        <PlaceList $offset={offset}>
          {places.map((p, i) =>
            p ? (
              <Place key={p.kind} $current={p.kind === current}>
                <Expander>{p.expandable && <Stroke kind="chevR" color="#888" />}</Expander>
                <PlaceIcon kind={p.kind} />
                <PlaceName>{p.name}</PlaceName>
                {p.pinned && <PushPin size={9} />}
              </Place>
            ) : (
              <PlaceDivider key={i} />
            )
          )}
        </PlaceList>
        <ScrollTrack />
        {children}
      </Body>
      <StatusBar>
        {status}
        <ViewButtons>
          <ViewButton $on aria-label="详细信息"><Stroke kind="lines" /></ViewButton>
          <ViewButton aria-label="大图标"><Stroke kind="max" /></ViewButton>
        </ViewButtons>
      </StatusBar>
    </Frame>
  );
};

const Pointer = styled.svg`
  position: absolute;
  top: 407px;
  left: 373px;
`;

export default function App() {
  return (
    <Screen>
      <GlobalStyle />
      <SessionBar>
        <RdpIcon />
        192.168.11.93 - 远程桌面连接
      </SessionBar>
      <Desktop>
        <Wallpaper />
        <Shortcuts>
          {shortcuts.map((s, i) => (
            <Shortcut key={i}>
              <ShortcutArt>{s.art}</ShortcutArt>
              <ShortcutName $latin={s.latin}>{s.name}</ShortcutName>
            </Shortcut>
          ))}
        </Shortcuts>
        <Explorer title="倩倩的生日礼物" active={false} places={homePlaces} current="home" offset={5} path={["倩倩的生日礼物"]} status="3 个项目" />
        <Explorer title="2" active places={folderPlaces} current="pc" offset={0} path={crumbs} status="7 个项目">
          <Files />
        </Explorer>
        <Pointer width="26" height="84" viewBox="0 0 26 84" aria-hidden="true">
          <path d="M4 0L17 18l-5 .5L24 83 7.500 20.500 1 22z" fill="#fb5252" />
        </Pointer>
      </Desktop>
    </Screen>
  );
}
